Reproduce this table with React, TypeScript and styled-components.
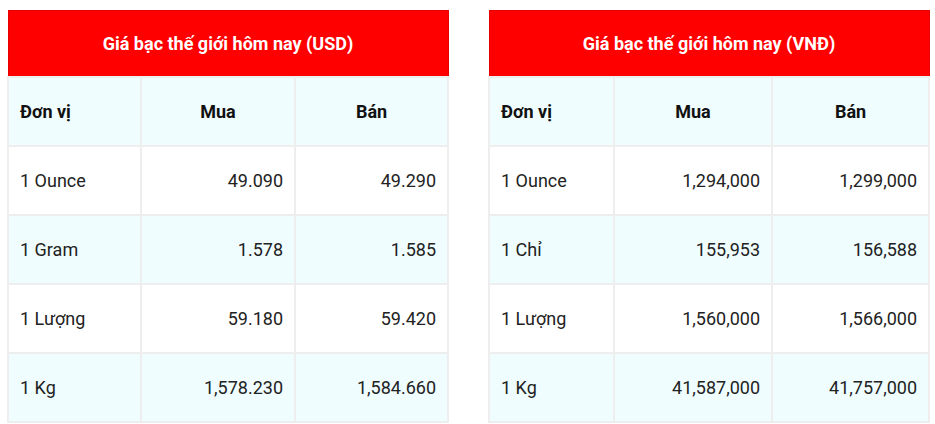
import React from "react";
import styled, { createGlobalStyle } from "styled-components";

const GlobalStyle = createGlobalStyle`
  html, body {
    margin: 0;
    padding: 0;
    background: #ffffff;
  }
  body {
    font-family: Roboto, "Noto Sans", "Liberation Sans", sans-serif;
    color: #222222;
  }
`;

const Page = styled.div`
  display: flex;
  gap: 39px;
  padding: 10px 0 0 7px;
`;

const Table = styled.table`
  width: 440px;
  border-collapse: collapse;
  table-layout: fixed;
`;

const TitleCell = styled.th`
  height: 65px;
  padding: 0;
  background: #ff0000;
  border: 1px solid #e60000;
  color: #ffffff;
  font-size: 18px;
  font-weight: 700;
  text-align: center;
  vertical-align: middle;
`;

const Row = styled.tr<{ $shade?: boolean }>`
  background: ${(p) => (p.$shade ? "#effdfe" : "#ffffff")};
`;

const Cell = styled.td<{ $head?: boolean; $align?: "left" | "center" | "right" }>`
  height: 69px;
  box-sizing: border-box;
  padding: 0 11px 1px 11px;
  border: 2px solid #eeeeee;
  font-size: 18px;
  font-weight: ${(p) => (p.$head ? 700 : 400)};
  color: ${(p) => (p.$head ? "#111111" : "#222222")};
  text-align: ${(p) => p.$align ?? "left"};
  vertical-align: middle;
  white-space: nowrap;
`;

type PriceRow = [string, string, string];

interface PriceTableProps {
  title: string;
  widths: [number, number, number];
  rows: PriceRow[];
}

function PriceTable({ title, widths, rows }: PriceTableProps) {
  return (
    <Table>
      <colgroup>
        {widths.map((w, i) => (
          <col key={i} style={{ width: w }} />
        ))}
      </colgroup>
      <thead>
        <tr>
          <TitleCell colSpan={3}>{title}</TitleCell>
        </tr>
      </thead>
      <tbody>
        <Row $shade>
          <Cell $head>Đơn vị</Cell>
          <Cell $head $align="center">
            Mua
          </Cell>
          <Cell $head $align="center">
            Bán
          </Cell>
        </Row>
        {rows.map((r, i) => (
          <Row key={r[0]} $shade={i % 2 === 1}>
            <Cell>{r[0]}</Cell>
            <Cell $align="right">{r[1]}</Cell>
            <Cell $align="right">{r[2]}</Cell>
          </Row>
        ))}
      </tbody>
    </Table>
  );
}

const usdRows: PriceRow[] = [
  ["1 Ounce", "49.090", "49.290"],
  ["1 Gram", "1.578", "1.585"],
  ["1 Lượng", "59.180", "59.420"],
  ["1 Kg", "1,578.230", "1,584.660"],
];

const vndRows: PriceRow[] = [
  ["1 Ounce", "1,294,000", "1,299,000"],
  ["1 Chỉ", "155,953", "156,588"],
  ["1 Lượng", "1,560,000", "1,566,000"],
  ["1 Kg", "41,587,000", "41,757,000"],
];

export default function App() {
  return (
    <>
      <GlobalStyle />
      <Page>
        <PriceTable
          title="Giá bạc thế giới hôm nay (USD)"
          widths={[133, 154, 153]}
          rows={usdRows}
        />
        <PriceTable
          title="Giá bạc thế giới hôm nay (VNĐ)"
          widths={[125, 158, 157]}
          rows={vndRows}
        />
      </Page>
    </>
  );
}
